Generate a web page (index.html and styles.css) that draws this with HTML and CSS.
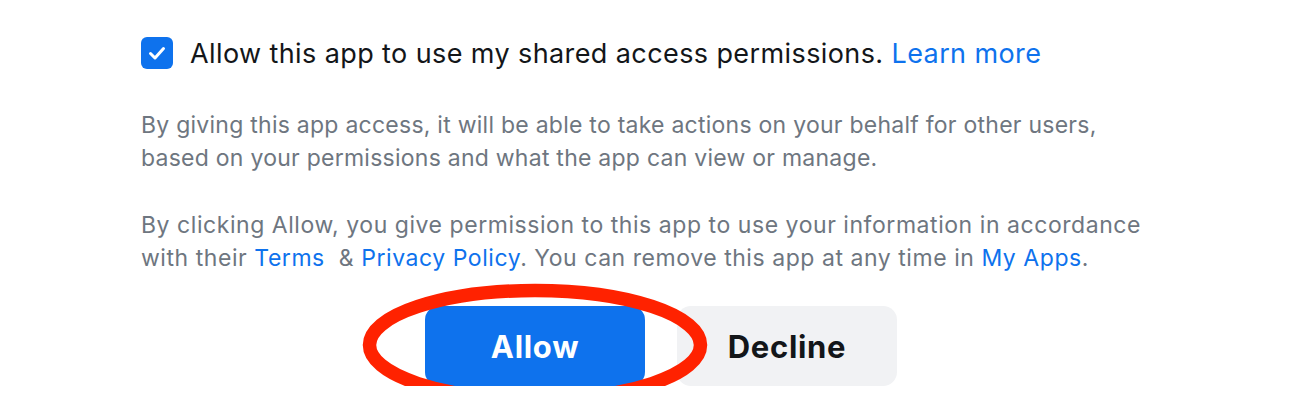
FILE: index.html
```html
<!DOCTYPE html>
<html lang="en">
<head>
<meta charset="utf-8">
<title>Allow app</title>
<link rel="stylesheet" href="styles.css">
</head>
<body>
<main class="consent">
  <label class="check-row">
    <span class="checkbox">
      <svg viewBox="0 0 32 32" width="32" height="32" aria-hidden="true">
        <path d="M9.5 16.5 L14 21 L22.5 11.5" fill="none" stroke="#fff" stroke-width="3" stroke-linecap="round" stroke-linejoin="round"/>
      </svg>
    </span>
    <span class="check-text">Allow this app to use my shared access permissions. <a class="link" href="#">Learn more</a></span>
  </label>
  <p class="note note-first">By giving this app access, it will be able to take actions on your behalf for other users,<br>based on your permissions and what the app can view or manage.</p>
  <p class="note note-legal">By clicking Allow, you give permission to this app to use your information in accordance<br>with their <a class="link" href="#">Terms</a>&nbsp; &amp; <a class="link" href="#">Privacy Policy</a>. You can remove this app at any time in <a class="link" href="#">My Apps</a>.</p>
  <div class="actions">
    <button class="btn btn-allow" type="button">Allow</button>
    <button class="btn btn-decline" type="button">Decline</button>
    <svg class="annotation" width="360" height="136" viewBox="0 0 360 136" aria-hidden="true">
      <ellipse cx="180" cy="68" rx="165.5" ry="54.5" fill="none" stroke="#ff2200" stroke-width="13.5"/>
    </svg>
  </div>
</main>
</body>
</html>
```
FILE: styles.css
```css
* { box-sizing: border-box; }
html, body { margin: 0; padding: 0; background: #fff; }
body {
  font-family: Inter, "Noto Sans", "Liberation Sans", sans-serif;
  -webkit-font-smoothing: antialiased;
}
.consent {
  padding: 37px 0 0 141px;
}
.check-row {
  display: flex;
  align-items: center;
  gap: 17px;
  height: 32px;
}
.checkbox {
  width: 32px;
  height: 32px;
  border-radius: 6px;
  background: #0e72ed;
  display: flex;
  flex: none;
}
.check-text {
  font-size: 27px;
  letter-spacing: 0.4px;
  color: #131619;
  white-space: nowrap;
}
.link {
  color: #0e72ed;
  text-decoration: none;
}
.note {
  margin: 34px 0 0;
  font-size: 23px;
  letter-spacing: 0.25px;
  line-height: 33px;
  color: #6e7680;
  white-space: nowrap;
}
.note-first { margin-top: 39.5px; }
.note-legal { letter-spacing: 0.55px; }
.actions {
  position: relative;
  display: flex;
  gap: 32px;
  margin-top: 31.5px;
  padding-left: 284px;
}
.btn {
  width: 220px;
  height: 80px;
  border: 0;
  border-radius: 14px;
  font-family: inherit;
  font-size: 31px;
  letter-spacing: 0.7px;
  font-weight: 700;
  cursor: pointer;
}
.btn-allow {
  background: #0e72ed;
  color: #fff;
}
.btn-decline {
  background: #f1f2f4;
  color: #131619;
}
.annotation {
  position: absolute;
  left: 214px;
  top: -29px;
  pointer-events: none;
}
```
